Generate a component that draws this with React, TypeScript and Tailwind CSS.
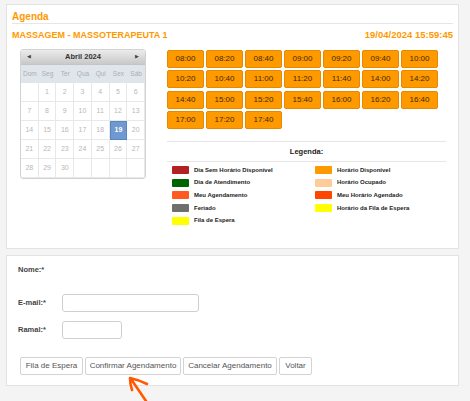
import React from "react";

// ── Data ──────────────────────────────────────────────────────
const slots = [
  "08:00", "08:20", "08:40", "09:00", "09:20", "09:40", "10:00",
  "10:20", "10:40", "11:00", "11:20", "11:40", "14:00", "14:20",
  "14:40", "15:00", "15:20", "15:40", "16:00", "16:20", "16:40",
  "17:00", "17:20", "17:40",
];

const weekDays = ["Dom", "Seg", "Ter", "Qua", "Qui", "Sex", "Sáb"];

// April 2024 starts on a Monday
const days: (number | null)[] = [null, ...Array.from({ length: 30 }, (_, i) => i + 1)];
while (days.length < 35) days.push(null);

const legend = [
  { color: "bg-[#b22222]", label: "Dia Sem Horário Disponível" },
  { color: "bg-[#ff9900]", label: "Horário Disponível" },
  { color: "bg-[#006400]", label: "Dia de Atendimento" },
  { color: "bg-[#ffcc99]", label: "Horário Ocupado" },
  { color: "bg-[#ff5a1f]", label: "Meu Agendamento" },
  { color: "bg-[#ff4500]", label: "Meu Horário Agendado" },
  { color: "bg-[#6e6e6e]", label: "Feriado" },
  { color: "bg-[#ffff00]", label: "Horário da Fila de Espera" },
  { color: "bg-[#ffff00]", label: "Fila de Espera" },
];

// ── Calendar ──────────────────────────────────────────────────
const Calendar = () => (
  <div className="w-[126px] border border-[#d2d2d2] rounded-[3px] overflow-hidden bg-white">
    <div className="h-[15px] flex items-center justify-between px-[6px] bg-gradient-to-b from-[#ececec] to-[#c9c9c9] border-b border-[#c4c4c4]">
      <span className="text-[4.5px] text-[#444]">◀</span>
      <span className="text-[7.5px] font-bold text-[#333]">Abril 2024</span>
      <span className="text-[4.5px] text-[#444]">▶</span>
    </div>
    <div className="grid grid-cols-7 h-[18px] bg-[#dfe5ea] items-center">
      {weekDays.map((d) => (
        <span key={d} className="text-center text-[6.5px] text-[#a9b0b6]">{d}</span>
      ))}
    </div>
    <div className="grid grid-cols-7">
      {days.map((d, i) => (
        <div
          key={i}
          className={
            d === 19
              ? "h-[19px] flex items-center justify-center text-[7px] font-bold text-white bg-[#6f99d0] border border-[#5a86bf]"
              : "h-[19px] flex items-center justify-center text-[7px] text-[#b8b8b8] border-r border-b border-[#e8e8e8]"
          }
        >
          {d ?? ""}
        </div>
      ))}
    </div>
  </div>
);

// ── App ───────────────────────────────────────────────────────
export default function App() {
  return (
    <div className="relative w-[470px] h-[401px] overflow-hidden bg-[#f4f4f4] pt-[4px] pl-[6px] font-['Liberation_Sans',Arial,sans-serif]">
      {/* ── Agenda panel ─────────────────────────────────── */}
      <div className="w-[453px] h-[245px] bg-white border border-[#e3e3e3] px-[5px] pt-[5px]">
        <div className="h-[14px] leading-[13px] border-b border-[#e6e6e6] text-[10px] font-bold text-[#ff9900]">
          Agenda
        </div>
        <div className="mt-[5px] h-[12px] leading-[12px] flex justify-between font-bold text-[#ff9900]">
          <span className="text-[9px]">MASSAGEM - MASSOTERAPEUTA 1</span>
          <span className="text-[9.5px]">19/04/2024 15:59:45</span>
        </div>

        <div className="mt-[8px] flex">
          <div className="ml-[8px]">
            <Calendar />
          </div>

          <div className="ml-[21px] pt-[1px]">
            <div className="grid grid-cols-[repeat(7,37px)] gap-x-[2px] gap-y-[2.33px]">
              {slots.map((s) => (
                <button
                  key={s}
                  className="h-[18px] rounded-[2px] bg-[#ff9900] border border-[#e58a00] text-[8px] text-[#3d2a00]"
                >
                  {s}
                </button>
              ))}
            </div>

            {/* legend */}
            <div className="mt-[12px] w-[279px] border-t border-[#e6e6e6]">
              <div className="h-[20px] leading-[19px] text-center text-[7.5px] font-bold text-[#222] border-b border-[#e6e6e6]">
                Legenda:
              </div>
              <div className="pt-[2px] pl-[5px] grid grid-cols-[143px_1fr]">
                {legend.map((l) => (
                  <div key={l.label} className="h-[12.6px] flex items-center gap-[5px]">
                    <span className={`w-[17px] h-[8px] rounded-[1px] ${l.color}`} />
                    <span className="text-[6px] font-bold text-[#222]">{l.label}</span>
                  </div>
                ))}
              </div>
            </div>
          </div>
        </div>
      </div>

      {/* ── Form panel ───────────────────────────────────── */}
      <div className="mt-[6px] w-[453px] h-[131px] bg-white border border-[#e3e3e3] px-[11px] pt-[8px]">
        <div className="h-[12px] leading-[12px] text-[7.5px] font-bold text-[#444]">Nome:*</div>

        <div className="mt-[18px] flex items-center">
          <span className="w-[44px] text-[7.5px] font-bold text-[#444]">E-mail:*</span>
          <input className="w-[137px] h-[18px] border border-[#cfcfcf] rounded-[3px] bg-white outline-none" />
        </div>

        <div className="mt-[9px] flex items-center">
          <span className="w-[44px] text-[7.5px] font-bold text-[#444]">Ramal:*</span>
          <input className="w-[60px] h-[18px] border border-[#cfcfcf] rounded-[3px] bg-white outline-none" />
        </div>

        <div className="mt-[18px] ml-[2px] flex gap-[2px]">
          <button className="w-[63px] h-[18px] border border-[#d3d3d3] rounded-[2px] bg-white text-[8px] text-[#555]">Fila de Espera</button>
          <button className="w-[96px] h-[18px] border border-[#d3d3d3] rounded-[2px] bg-white text-[8px] text-[#555]">Confirmar Agendamento</button>
          <button className="w-[94px] h-[18px] border border-[#d3d3d3] rounded-[2px] bg-white text-[8px] text-[#555]">Cancelar Agendamento</button>
          <button className="w-[33px] h-[18px] border border-[#d3d3d3] rounded-[2px] bg-white text-[8px] text-[#555]">Voltar</button>
        </div>
      </div>

      {/* hand-drawn arrow annotation */}
      <svg className="absolute left-0 top-0 pointer-events-none" width="470" height="401" viewBox="0 0 470 401">
        <path
          d="M131 379 L146 401 M130 378 Q130 384 132 390 M130 378 Q139 380 147 384"
          fill="none"
          stroke="#ff5a00"
          strokeWidth="2.6"
          strokeLinecap="round"
        />
      </svg>
    </div>
  );
}
